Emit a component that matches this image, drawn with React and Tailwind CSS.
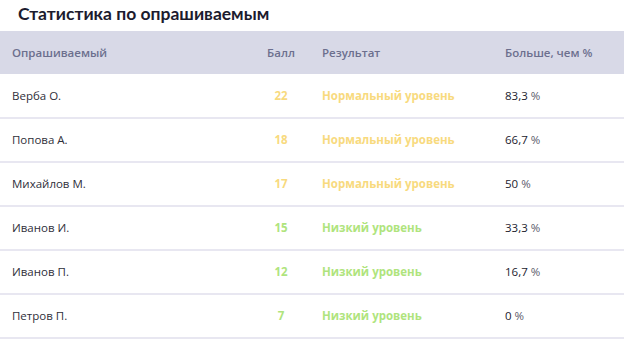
const rows = [
  { name: 'Верба О.', score: 22, result: 'Нормальный уровень', level: 'normal', pct: '83,3' },
  { name: 'Попова А.', score: 18, result: 'Нормальный уровень', level: 'normal', pct: '66,7' },
  { name: 'Михайлов М.', score: 17, result: 'Нормальный уровень', level: 'normal', pct: '50' },
  { name: 'Иванов И.', score: 15, result: 'Низкий уровень', level: 'low', pct: '33,3' },
  { name: 'Иванов П.', score: 12, result: 'Низкий уровень', level: 'low', pct: '16,7' },
  { name: 'Петров П.', score: 7, result: 'Низкий уровень', level: 'low', pct: '0' },
];

export default function App() {
  return (
    <div className="w-[624px] h-[343px] bg-white overflow-hidden font-['Open_Sans',sans-serif]">
      <h2 className="pl-[18px] pt-[2px] h-[31px] text-[17.5px] leading-[24px] font-bold text-[#1c1b2e] font-['Lato',sans-serif]">
        Статистика по опрашиваемым
      </h2>

      {/* header */}
      <div className="grid grid-cols-[246px_70px_189px_1fr] items-center h-[43px] bg-[#d8d9e7] text-[11.5px] font-semibold text-[#6c6f8e]">
        <div className="pl-3">Опрашиваемый</div>
        <div className="text-center">Балл</div>
        <div className="pl-[6px]">Результат</div>
        <div>Больше, чем %</div>
      </div>

      {rows.map((r, i) => (
        <div
          key={r.name}
          className={`grid grid-cols-[246px_70px_189px_1fr] items-center border-b-2 border-[#e8e7f1] text-[11.5px] ${i === 0 ? 'h-[45px]' : 'h-[44px]'}`}
        >
          <div className="pl-3 text-[#2f2f3a]">{r.name}</div>
          <div className={`text-center font-bold ${r.level === 'normal' ? 'text-[#f8da7e]' : 'text-[#afe47d]'}`}>
            {r.score}
          </div>
          <div className={`pl-[6px] font-bold ${r.level === 'normal' ? 'text-[#f8da7e]' : 'text-[#afe47d]'}`}>
            {r.result}
          </div>
          <div className="text-[#22222e]">
            {r.pct} <span className="text-[#5b5b6b]">%</span>
          </div>
        </div>
      ))}
    </div>
  );
}
